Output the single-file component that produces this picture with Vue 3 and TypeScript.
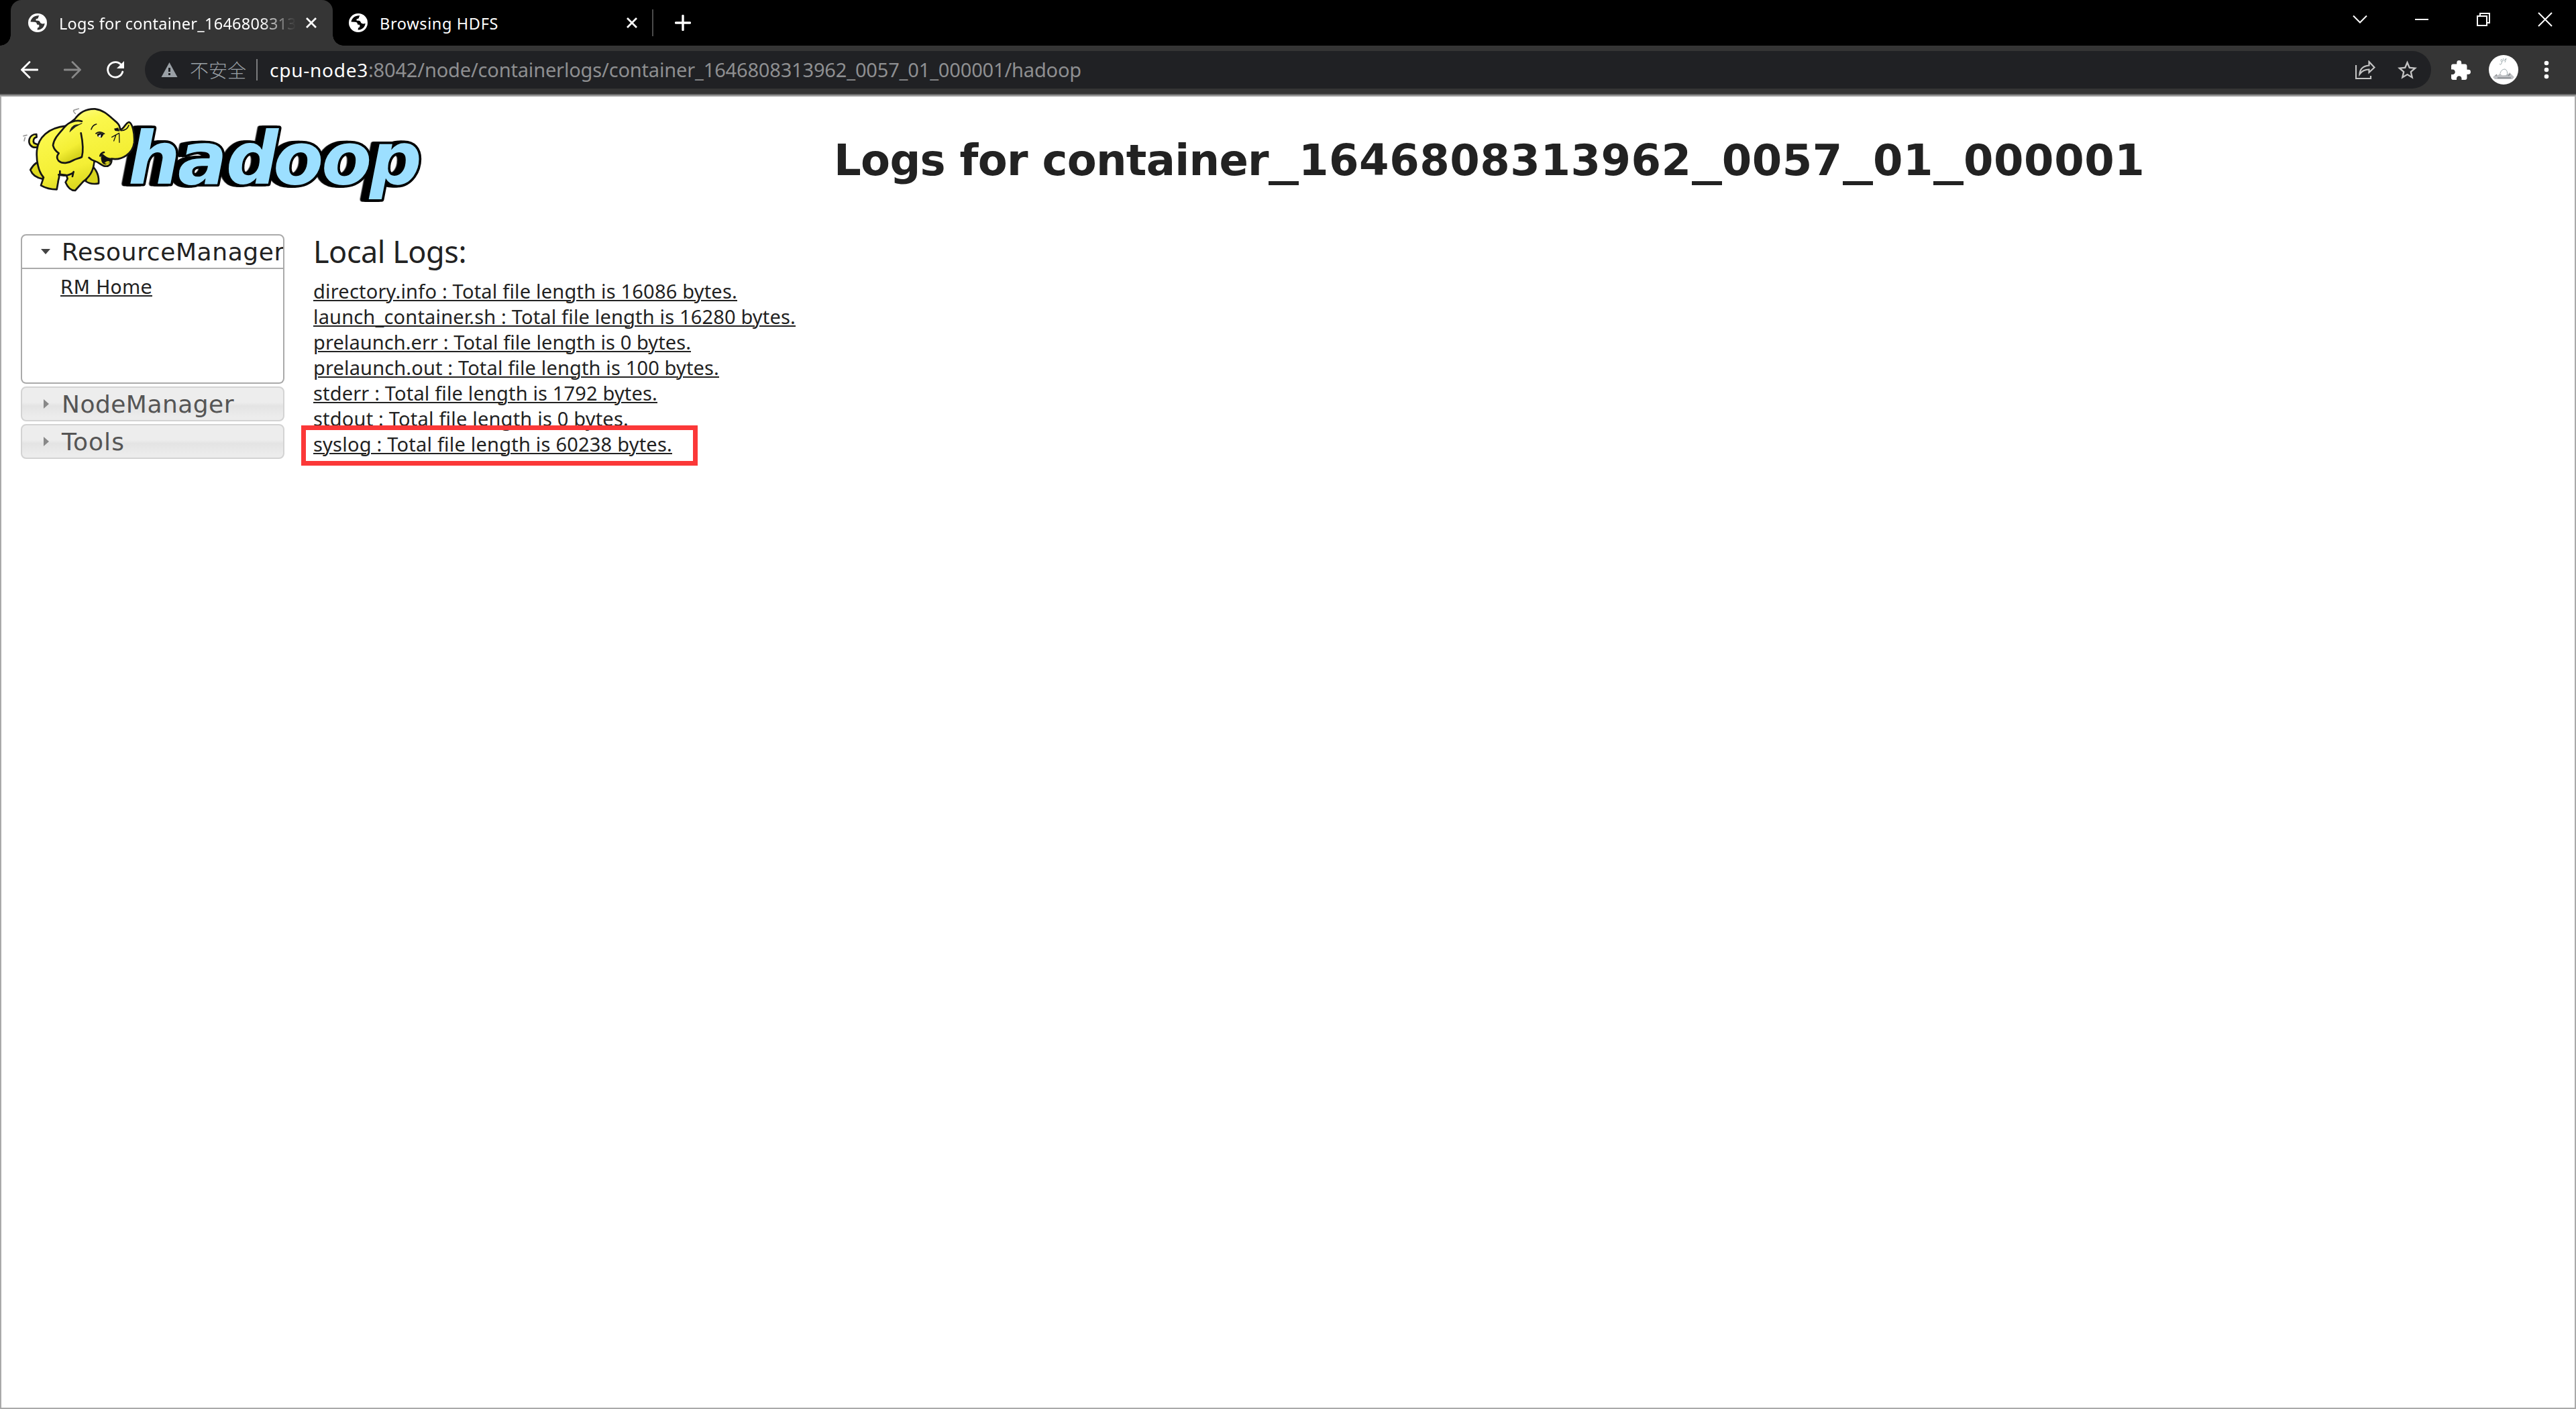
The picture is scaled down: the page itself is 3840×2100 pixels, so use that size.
<script setup lang="ts">
import type { Directive } from 'vue'

interface LogFile {
  name: string
  length: number
  width: number
}

const logs: LogFile[] = [
  { name: 'directory.info', length: 16086, width: 632 },
  { name: 'launch_container.sh', length: 16280, width: 719 },
  { name: 'prelaunch.err', length: 0, width: 563 },
  { name: 'prelaunch.out', length: 100, width: 605 },
  { name: 'stderr', length: 1792, width: 513 },
  { name: 'stdout', length: 0, width: 470 },
  { name: 'syslog', length: 60238, width: 535 },
]

const idParts: string[] = ['1646808313962', '0057', '01', '000001']
const digitWidth = 45.05

// Spaces the letters so that a line of text takes up the given width in pixels.
const vFit: Directive<HTMLElement, number> = {
  mounted(el, { value }) {
    const count = (el.textContent ?? '').length
    const natural = el.getBoundingClientRect().width
    if (count > 0) el.style.letterSpacing = `${(value - natural) / count}px`
  },
}
</script>

<template>
  <div class="window">
    <div class="tabs">
      <div class="tab active">
        <svg class="globe" viewBox="0 0 28 28"><circle cx="14" cy="14" r="14" fill="#fff" /><path class="land" d="M16.5 3.3C10 2.4 4.6 6.5 3.5 12.5L9 12.7C12 12.8 13 14 13 16.5L16.3 17V20.5C14.5 20.7 13.5 21.5 13.7 24.5C19.5 24.8 24.3 20.5 24.6 14.8C22 16 18.5 15.5 17.8 13.3C17.4 11.5 16.5 10.8 14 10.7H11.6V8.3C14 8.3 15.2 7.5 15.2 5.3Z" /></svg>
        <div class="tab-title"><span v-fit="354">Logs for container_1646808313</span></div>
        <svg class="x" viewBox="0 0 16 16"><path d="M1 1 15 15M15 1 1 15" /></svg>
      </div>
      <div class="tab second">
        <svg class="globe" viewBox="0 0 28 28"><circle cx="14" cy="14" r="14" fill="#fff" /><path class="land" d="M16.5 3.3C10 2.4 4.6 6.5 3.5 12.5L9 12.7C12 12.8 13 14 13 16.5L16.3 17V20.5C14.5 20.7 13.5 21.5 13.7 24.5C19.5 24.8 24.3 20.5 24.6 14.8C22 16 18.5 15.5 17.8 13.3C17.4 11.5 16.5 10.8 14 10.7H11.6V8.3C14 8.3 15.2 7.5 15.2 5.3Z" /></svg>
        <div class="tab-title"><span v-fit="177">Browsing HDFS</span></div>
        <svg class="x" viewBox="0 0 16 16"><path d="M1 1 15 15M15 1 1 15" /></svg>
      </div>
      <div class="tab-sep"></div>
      <svg class="plus" viewBox="0 0 24 24"><path d="M12 1.5V22.5M1.5 12H22.5" /></svg>
      <div class="controls">
        <svg width="20" height="20" viewBox="0 0 20 20"><path d="M0 4.5 10 14.5 20 4.5" /></svg>
        <svg width="20" height="20" viewBox="0 0 20 20"><path d="M0 10H20" /></svg>
        <svg width="20" height="20" viewBox="0 0 20 20"><path d="M1 5H15V19H1ZM5 5V1H19V15H15" /></svg>
        <svg width="20" height="20" viewBox="0 0 20 20"><path d="M0 0 20 20M20 0 0 20" /></svg>
      </div>
    </div>

    <div class="toolbar">
      <svg class="nav" viewBox="0 0 26 26"><path d="M25 13H2M13 1.5 1.5 13 13 24.5" /></svg>
      <svg class="nav dim" viewBox="0 0 26 26"><path d="M1 13H24M13 1.5 24.5 13 13 24.5" /></svg>
      <svg class="nav" viewBox="0 0 26 26"><path d="M22.5 6.8A11.3 11.3 0 1 0 23.8 16" /><path d="M26 0V11H15Z" fill="#fff" stroke="none" /></svg>
      <div class="omnibox">
        <svg class="warn" viewBox="0 0 24 22"><path d="M12 0 24 22H0Z" fill="#9aa0a6" /><path d="M10.5 8h3v6h-3zM10.5 16h3v3h-3z" fill="#202124" /></svg>
        <span class="insecure">不安全</span>
        <span class="divider"></span>
        <span v-fit="147" class="host">cpu-node3</span>
        <span v-fit="1063" class="path">:8042/node/containerlogs/container_1646808313962_0057_01_000001/hadoop</span>
        <svg class="share" viewBox="0 0 30 28"><path d="M1 7V27H23V23M6.5 20.5C7 12 12.5 8.2 20.5 7.5V2L28.5 10.5 20.5 18V13.5C14 13.5 10 15.5 6.5 20.5Z" /></svg>
        <svg class="star" viewBox="2 2 20 19"><path d="M22 9.24l-7.19-.62L12 2 9.19 8.63 2 9.24l5.46 4.73L5.82 21 12 17.27 18.18 21l-1.63-7.03L22 9.24zM12 15.4l-3.76 2.27 1-4.28-3.32-2.88 4.38-.38L12 6.1l1.71 4.04 4.38.38-3.32 2.88 1 4.28L12 15.4z" /></svg>
      </div>
      <svg class="puzzle" viewBox="2 1 21 21"><path d="M20.5 11H19V7c0-1.1-.9-2-2-2h-4V3.5a2.5 2.5 0 0 0-5 0V5H4c-1.1 0-1.99.9-1.99 2v3.8H3.5c1.49 0 2.7 1.21 2.7 2.7s-1.21 2.7-2.7 2.7H2V20c0 1.1.9 2 2 2h3.8v-1.5c0-1.49 1.21-2.7 2.7-2.7 1.49 0 2.7 1.21 2.7 2.7V22H17c1.1 0 2-.9 2-2v-4h1.5a2.5 2.5 0 0 0 0-5z" /></svg>
      <svg class="avatar" viewBox="0 0 44 44">
        <circle cx="22" cy="22" r="22" fill="#fff" />
        <path d="M6 33Q10 28 14 30L17 27 19 30Q24 31 28 29L31 26 34 29 38 33 35 36H9Z" fill="#bfc1c4" />
        <path d="M13 34H33M10 31l2-2M29 31l3-3" stroke="#85888c" stroke-width="1.5" />
        <path d="M17 27Q19 21 24 21 29 23 27 31M16 13q2 3 3-1l3-7M19 6q-2 3 0 4M22 9l4-4-2 6" fill="none" stroke="#9daaad" />
      </svg>
      <svg class="dots" viewBox="0 0 8 28"><circle cx="4" cy="4" r="3.3" /><circle cx="4" cy="14" r="3.3" /><circle cx="4" cy="24" r="3.3" /></svg>
    </div>

    <main class="page">
      <header>
        <svg class="logo" viewBox="0 0 1890 510">
          <text class="word" y="373" x="513 735 951 1162 1378 1592">hadoop</text>
          <defs>
            <linearGradient id="hide" x1="0" y1="0" x2=".4" y2="1">
              <stop offset="0" stop-color="#ffffa8" /><stop offset=".3" stop-color="#fbf84d" /><stop offset=".75" stop-color="#f4ef35" /><stop offset="1" stop-color="#d7d31c" />
            </linearGradient>
          </defs>
          <g class="elephant">
            <path d="M108 208C78 215 65 190 72 170 78 154 92 150 103 150L104 163C91 165 86 179 92 190L110 197Z" />
            <path d="M103 278C93 285 84 295 76 309 83 331 105 345 130 350L148 315Z" fill="#ded91f" />
            <path d="M360 300C377 320 383 345 381 370 361 374 338 371 323 360L335 322Z" fill="#d8d41e" />
            <path d="M275 82C300 46 334 36 365 37 408 42 434 75 463 98 471 105 477 116 477 130 496 128 498 101 517 96 532 101 543 145 540 188 534 235 487 268 439 260 441 282 428 298 404 292 386 284 373 270 362 270 358 318 338 342 312 362L276 402C258 402 244 391 233 365L242 349 237 333C224 332 213 328 204 332 207 344 200 352 200 363L194 397C171 397 144 391 123 379L135 343C112 320 101 266 105 222 111 165 155 121 236 113Z" />
            <path d="M397 242C393 263 398 279 410 282 422 282 435 271 437 261 421 261 409 253 399 243Z" fill="#111" /><path d="M407 279Q420 265 431 273L421 286Z" fill="#ccc51e" stroke="none" />
            <path d="M306 92C277 84 245 98 231 116 207 144 181 168 177 200 181 216 190 227 203 235 193 247 193 259 202 269 219 284 246 280 267 267 280 259 293 259 306 252 313 226 310 184 302 145" />
            <path d="M252 139C257 118 270 106 291 107L307 101 279 116Z" fill="#222" stroke-width="2" />
            <path d="M202 331C220 337 246 336 268 322M208 315V332M269 318 264 339M338 255Q350 267 363 270M388 247Q391 234 405 231" fill="none" />
            <path d="M348 128Q354 109 371 105M369 147Q386 134 407 148M481 134Q508 133 516 110" fill="none" stroke-width="5" />
            <path d="M374 149Q389 139 405 149L394 166 376 160Z" fill="#151515" stroke="none" /><path d="M378 159 391 151 390 164Z" fill="#fff" stroke="none" />
            <path d="M450 125 468 121 475 137 455 135Z" fill="#151515" stroke="none" />
            <path d="M440 163 473 145M449 180 458 155M474 187 473 149" fill="none" stroke-width="4" />
            <path d="M277 58Q260 43 278 40L292 36M48 180 52 165M45 158 60 154" fill="none" stroke="#999" stroke-width="5" />
          </g>
        </svg>
        <h1><span v-fit="648">Logs for container</span><template v-for="part in idParts" :key="part"><span class="underscore">_</span><span v-fit="part.length * digitWidth">{{ part }}</span></template></h1>
      </header>
      <div class="columns">
        <nav class="side">
          <div class="head open"><i class="tri down"></i><span v-fit="332">ResourceManager</span></div>
          <div class="panel"><a v-fit="137">RM Home</a></div>
          <div class="head"><i class="tri"></i><span v-fit="257">NodeManager</span></div>
          <div class="head"><i class="tri"></i><span v-fit="94">Tools</span></div>
        </nav>
        <section class="logs">
          <h2><span v-fit="228">Local Logs:</span></h2>
          <div v-for="log in logs" :key="log.name" class="row">
            <a v-fit="log.width">{{ log.name }} : Total file length is {{ log.length }} bytes.</a>
          </div>
          <div class="mark"></div>
        </section>
      </div>
    </main>
  </div>
</template>

<style>
body {
  margin: 0;
  background: #fff;
}
</style>

<style scoped>
.window {
  width: 3840px;
  height: 2100px;
  display: flex;
  flex-direction: column;
  overflow: hidden;
  font-family: "Noto Sans", "Noto Sans CJK SC", sans-serif;
  white-space: nowrap;
}
svg {
  display: block;
  flex: none;
}
.tabs {
  height: 68px;
  background: #000;
  display: flex;
  align-items: center;
  padding-left: 16px;
}
.tab {
  height: 68px;
  box-sizing: border-box;
  display: flex;
  align-items: center;
  flex: none;
  color: #fff;
  font-size: 23.5px;
}
.active {
  width: 480px;
  padding-left: 26px;
  background: #353535;
  border-radius: 16px 16px 0 0;
  position: relative;
}
.active::before,
.active::after {
  content: "";
  position: absolute;
  bottom: 0;
  width: 16px;
  height: 16px;
}
.active::before {
  left: -16px;
  background: radial-gradient(circle at 0 0, transparent 15.5px, #353535 16px);
}
.active::after {
  right: -16px;
  background: radial-gradient(circle at 100% 0, transparent 15.5px, #353535 16px);
}
.second {
  width: 476px;
  padding-left: 24px;
}
.globe {
  width: 28px;
  height: 28px;
}
.land {
  fill: #353535;
}
.second .land {
  fill: #000;
}
.tab-title {
  width: 341px;
  margin-left: 18px;
  line-height: 68px;
  padding-top: 2px;
}
.active .tab-title {
  width: 354px;
  -webkit-mask-image: linear-gradient(90deg, #000 300px, transparent 353px);
  mask-image: linear-gradient(90deg, #000 300px, transparent 353px);
}
.x {
  width: 16px;
  height: 16px;
  margin-left: 14px;
  fill: none;
  stroke: #fff;
  stroke-width: 2.8;
}
.second .x {
  margin-left: 27px;
}
.tab-sep {
  width: 2px;
  height: 40px;
  background: #4a4a4a;
}
.plus {
  width: 24px;
  height: 24px;
  margin-left: 32px;
  fill: none;
  stroke: #fff;
  stroke-width: 3.4;
  stroke-linecap: round;
}
.controls {
  margin-left: auto;
  margin-right: 36px;
  height: 58px;
  align-self: flex-start;
  display: flex;
  align-items: center;
  gap: 72px;
}
.controls svg {
  fill: none;
  stroke: #fff;
  stroke-width: 2;
  overflow: visible;
}
.toolbar {
  height: 72px;
  background: #353535;
  border-bottom: 2px solid #6b6b6b;
  display: flex;
  align-items: center;
  padding-left: 31px;
  flex: none;
}
.nav {
  width: 26px;
  height: 26px;
  fill: none;
  stroke: #fff;
  stroke-width: 2.8;
  stroke-linecap: round;
  margin-right: 38px;
}
.nav.dim {
  stroke: #888;
}
.omnibox {
  width: 3408px;
  height: 56px;
  box-sizing: border-box;
  margin-left: -7px;
  border-radius: 28px;
  background: #202124;
  display: flex;
  align-items: center;
  padding-left: 24px;
  font-size: 29px;
  line-height: 56px;
}
.warn {
  width: 25px;
  height: 22px;
}
.insecure {
  width: 84px;
  margin-left: 18px;
  font-family: "Noto Sans CJK SC", sans-serif;
  font-weight: 300;
  font-size: 28px;
  color: #9aa0a6;
}
.divider {
  width: 2px;
  height: 32px;
  margin-left: 15px;
  margin-right: 18px;
  background: #7b7c7e;
}
.host {
  font-size: 28px;
  color: #fff;
}
.path {
  color: #8e8f91;
}
.share {
  width: 30px;
  height: 28px;
  margin-left: auto;
  fill: none;
  stroke: #c4c4c4;
  stroke-width: 2.2;
}
.star {
  width: 29px;
  height: 28px;
  margin-left: 33px;
  margin-right: 21px;
  fill: #c4c4c4;
}
.puzzle {
  width: 29px;
  height: 29px;
  margin-left: 30px;
  fill: #fff;
}
.avatar {
  width: 44px;
  height: 44px;
  margin-left: 27px;
}
.dots {
  width: 8px;
  height: 28px;
  margin-left: 38px;
  fill: #fff;
}
.page {
  flex: 1;
  border: 2px solid #a9a9a9;
  color: #222;
  background: #fff;
}
header {
  display: flex;
  height: 205px;
}
.logo {
  width: 630px;
  height: 170px;
  margin: 6px 0 0 18px;
}
.word {
  font: italic bold 327px "DejaVu Sans", sans-serif;
  fill: #9cdfff;
  stroke: #000;
  stroke-width: 22;
  stroke-linejoin: round;
  paint-order: stroke;
  filter: drop-shadow(-14px 0 0 #000) drop-shadow(-14px 0 0 #000);
}
.elephant {
  fill: url(#hide);
  stroke: #151515;
  stroke-width: 8;
  stroke-linejoin: round;
  stroke-linecap: round;
}
h1 {
  margin: 57px 0 0 593px;
  font: bold 64px/76px "DejaVu Sans", sans-serif;
}
.underscore {
  display: inline-block;
  width: 32px;
  margin-right: 13px;
  transform: scaleX(1.406);
  transform-origin: 0 50%;
}
.columns {
  display: flex;
  align-items: flex-start;
}
.side {
  width: 393px;
  margin-left: 29px;
  font-family: "DejaVu Sans", sans-serif;
}
.head {
  height: 52px;
  box-sizing: border-box;
  border: 2px solid #d3d3d3;
  border-radius: 8px;
  margin-bottom: 4px;
  display: flex;
  align-items: center;
  font-size: 36px;
  line-height: 48px;
  color: #555;
  background: linear-gradient(#ededed 45%, #e4e4e4 56%, #ececec 90%);
  overflow: hidden;
}
.head span {
  flex: none;
  padding-top: 2px;
}
.head.open {
  margin: 0;
  border-color: #aaa;
  border-radius: 8px 8px 0 0;
  background: #fff;
  color: #222;
}
.tri {
  flex: none;
  width: 8px;
  height: 14px;
  margin: 0 19px 0 32px;
  background: #888;
  clip-path: polygon(0 0, 100% 50%, 0 100%);
}
.tri.down {
  width: 14px;
  height: 8px;
  margin: 0 17px 0 28px;
  background: #444;
  clip-path: polygon(0 0, 100% 0, 50% 100%);
}
.panel {
  height: 171px;
  box-sizing: border-box;
  border: 2px solid #aaa;
  border-top: 0;
  border-radius: 0 0 8px 8px;
  margin-bottom: 4px;
  padding: 11px 0 0 57px;
  font-size: 28px;
  line-height: 34px;
}
a {
  text-decoration: underline;
  text-decoration-thickness: 2px;
  text-underline-offset: 2px;
}
.logs {
  margin-left: 43px;
  position: relative;
}
h2 {
  margin: -1px 0 13px;
  font-weight: 400;
  font-size: 45px;
  line-height: 54px;
}
.row {
  height: 38px;
  font-size: 29px;
  line-height: 38px;
}
.mark {
  position: absolute;
  left: -18px;
  top: 285px;
  width: 591px;
  height: 60px;
  box-sizing: border-box;
  border: 7px solid #fb3838;
}
</style>
